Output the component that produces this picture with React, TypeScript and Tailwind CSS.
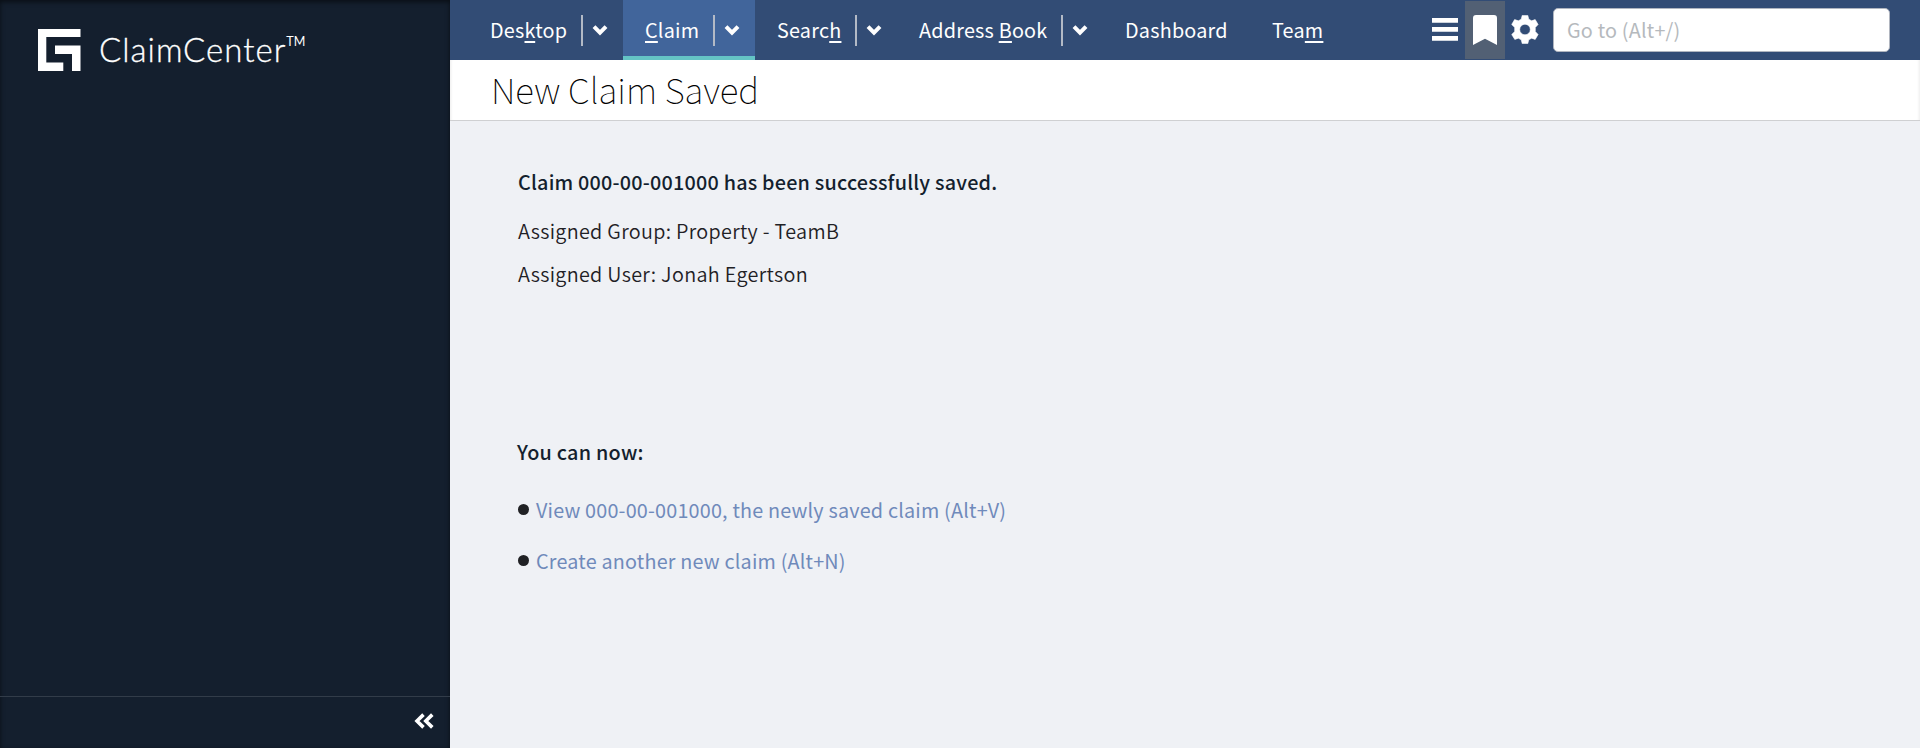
import React from "react";

type Tab = { before: string; key?: string; after?: string; menu?: boolean; active?: boolean; width: string };

const tabs: Tab[] = [
  { before: "Des", key: "k", after: "top", menu: true, width: "w-[155px]" },
  { before: "", key: "C", after: "laim", menu: true, active: true, width: "w-[132px]" },
  { before: "Searc", key: "h", menu: true, width: "w-[142px]" },
  { before: "Address ", key: "B", after: "ook", menu: true, width: "w-[206px]" },
  { before: "Dashboard", width: "w-[147px]" },
  { before: "Tea", key: "m", width: "w-[96px]" },
];

const links = [
  "View 000-00-001000, the newly saved claim (Alt+V)",
  "Create another new claim (Alt+N)",
];

function NavTab({ tab }: { tab: Tab }) {
  return (
    <a
      className={`flex h-[60px] shrink-0 items-center border-b-4 pl-[22px] text-[19.8px] tracking-[0.22px] text-white ${tab.width} ${
        tab.active ? "border-[#64c4c5] bg-[#41659b]" : "border-transparent"
      }`}
    >
      <span className="whitespace-pre pt-[3px] leading-[30px]">
        {tab.before}
        {tab.key && <span className="underline decoration-2 underline-offset-[3px]">{tab.key}</span>}
        {tab.after}
      </span>
      {tab.menu && (
        <span className="ml-auto mt-[5px] flex h-[31px] w-[42px] items-center border-l-2 border-[#b3bac6] pl-[9px]">
          <svg width="16" height="12" viewBox="0 0 16 12" className="-mt-px">
            <path d="M2 2.600l6 6 6-6" fill="none" stroke="#fff" strokeWidth="4" />
          </svg>
        </span>
      )}
    </a>
  );
}

export default function App() {
  return (
    <div className="flex h-[748px] w-full overflow-hidden bg-[#eff1f5] font-['Noto_Sans_CJK_SC',sans-serif]">
      <aside className="flex w-[450px] shrink-0 flex-col bg-[#141f2e] shadow-[inset_0_2px_5px_rgba(0,0,0,0.55)]">
        <div className="flex items-start pl-[38px] pt-[29px]">
          <svg width="43" height="42" viewBox="0 0 43 42" fill="#fff">
            <path d="M0 0h42.5v8H8.3v25.500h17V42H0z" />
            <path d="M17 16.500h25.500V42H34V25H17z" />
          </svg>
          <span className="ml-[18px] mt-px flex items-start whitespace-nowrap font-['Lato',sans-serif] font-light leading-[38px] text-white">
            <span className="text-[33px] tracking-[1px] [-webkit-text-stroke:0.3px_#fff]">ClaimCenter</span>
            <span className="-mt-[7px] text-[12.500px] font-normal">TM</span>
          </span>
        </div>
        <div className="mt-auto flex h-[52px] items-center justify-end border-t border-[#323c49] pb-[3px] pr-[16px]">
          <svg width="20" height="16" viewBox="0 0 20 16" fill="none" stroke="#fff" strokeWidth="3.600">
            <path d="M9.500 1.600L3 8l6.500 6.400M18.300 1.600L11.800 8l6.500 6.400" />
          </svg>
        </div>
      </aside>
      <main className="flex min-w-0 flex-1 flex-col">
        <header className="flex h-[60px] shrink-0 items-center bg-[#324c75] pl-[18px] pr-[30px]">
          <nav className="flex">
            {tabs.map((tab) => (
              <NavTab key={tab.before + tab.key} tab={tab} />
            ))}
          </nav>
          <div className="ml-auto flex items-center">
            <svg width="26" height="23" viewBox="0 0 26 23" fill="#fff" className="-mt-px mr-[7px]">
              <path d="M0 0h26v4.700H0zM0 9h26v4.700H0zM0 18h26v4.700H0z" />
            </svg>
            <span className="flex h-[58px] w-[40px] items-center justify-center bg-[#526074]">
              <svg width="24" height="30" viewBox="0 0 24 30" fill="#fff" className="-mt-px">
                <path d="M3 0h18q3 0 3 3v27l-12-6.200L0 30V3q0-3 3-3z" />
              </svg>
            </span>
            <svg width="28" height="29" viewBox="0 0 28 29" className="-mt-px ml-[6px]" fill="#fff" fillRule="evenodd" stroke="#fff" strokeWidth="0.6" strokeLinejoin="round">
              <path d="M11.200 .4h5.600l1 3.800 2.800 1.600 3.600-1.200 2.900 4.900-2.800 2.900v4.200l2.800 2.900-2.900 4.900-3.600-1.200-2.800 1.600-1 3.800h-5.600l-1-3.800-2.800-1.600-3.600 1.200L.7 19.500l3-2.900v-4.200l-3-2.900 2.900-4.900 3.800 1.200L10.200 4.200zM14 9.200a5.300 5.300 0 100 10.600 5.300 5.300 0 000-10.600z" />
            </svg>
            <input
              aria-label="Go to"
              placeholder="Go to (Alt+/)"
              className="ml-[14px] h-[44px] w-[337px] rounded-[5px] border border-[#b0b5bf] bg-white pb-[2px] pl-[13px] text-[19.8px] tracking-[0.2px] outline-none placeholder:text-[#b5b9bd]"
            />
          </div>
        </header>
        <div className="flex h-[61px] shrink-0 items-center border-b border-[#cfd0d2] bg-white pl-[41px] shadow-[inset_3px_0_3px_-2px_rgba(0,0,0,0.08),inset_-3px_0_3px_-2px_rgba(0,0,0,0.08)]">
          <h1 className="-mt-[2px] text-[35px] font-thin leading-[60px] text-black">New Claim Saved</h1>
        </div>
        <section className="flex flex-col whitespace-nowrap pl-[67px] pt-[45px] text-[19.8px] leading-[32px] text-[#1f2125]">
          <p className="pl-px font-medium tracking-[0.21px] text-[#141f2e]">Claim 000-00-001000 has been successfully saved.</p>
          <p className="mt-[17px] pl-px font-[350] tracking-[0.31px]">Assigned Group: Property - TeamB</p>
          <p className="mt-[11px] pl-px font-[350] tracking-[0.31px]">Assigned User: Jonah Egertson</p>
          <p className="mt-[146px] font-medium tracking-[0.25px] text-[#141f2e]">You can now:</p>
          <ul className="mt-[26px] flex flex-col gap-[19px] pl-px">
            {links.map((text) => (
              <li key={text} className="flex items-center">
                <span className="-mt-px mr-[7px] size-[11px] rounded-full bg-[#202124]" />
                <a className="tracking-[0.19px] text-[#6f8abb]">{text}</a>
              </li>
            ))}
          </ul>
        </section>
      </main>
    </div>
  );
}
